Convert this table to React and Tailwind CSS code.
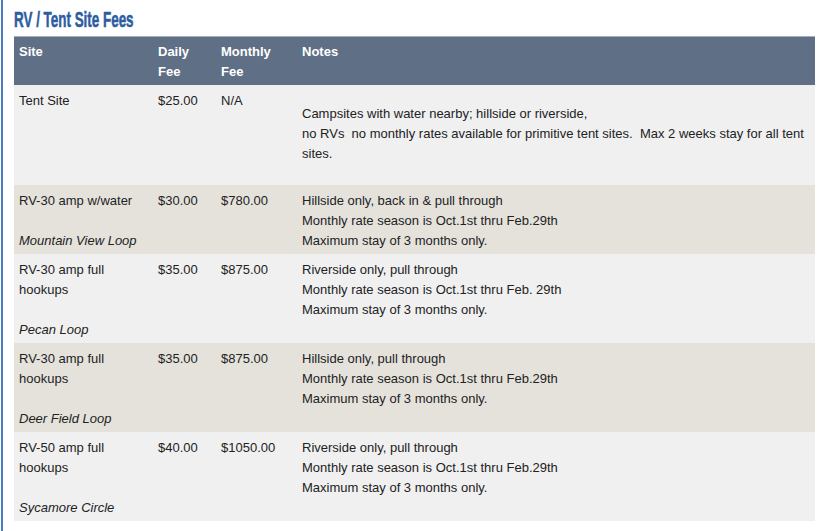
const rows = [
  {
    site: ["Tent Site"],
    loop: null,
    daily: "$25.00",
    monthly: "N/A",
    notes: [
      "Campsites with water nearby; hillside or riverside,",
      "no RVs\u00a0 no monthly rates available for primitive tent sites.\u00a0 Max 2 weeks stay for all tent sites.",
    ],
    tent: true,
  },
  {
    site: ["RV-30 amp w/water"],
    loop: "Mountain View Loop",
    daily: "$30.00",
    monthly: "$780.00",
    notes: [
      "Hillside only, back in & pull through",
      "Monthly rate season is Oct.1st thru Feb.29th",
      "Maximum stay of 3 months only.",
    ],
  },
  {
    site: ["RV-30 amp full hookups"],
    loop: "Pecan Loop",
    daily: "$35.00",
    monthly: "$875.00",
    notes: [
      "Riverside only, pull through",
      "Monthly rate season is Oct.1st thru Feb. 29th",
      "Maximum stay of 3 months only.",
    ],
  },
  {
    site: ["RV-30 amp full hookups"],
    loop: "Deer Field Loop",
    daily: "$35.00",
    monthly: "$875.00",
    notes: [
      "Hillside only, pull through",
      "Monthly rate season is Oct.1st thru Feb.29th",
      "Maximum stay of 3 months only.",
    ],
  },
  {
    site: ["RV-50 amp full hookups"],
    loop: "Sycamore Circle",
    daily: "$40.00",
    monthly: "$1050.00",
    notes: [
      "Riverside only, pull through",
      "Monthly rate season is Oct.1st thru Feb.29th",
      "Maximum stay of 3 months only.",
    ],
  },
];

export default function App() {
  return (
    <div className="min-h-[531px] bg-white ml-[1px] border-l-2 border-[#4a7bc4] pl-[11px] pr-[6px] font-['Liberation_Sans',Arial,sans-serif] text-[13px] leading-[20px] text-[#222]">
      {/* title */}
      <div className="h-[36px] pt-[9px] overflow-visible">
        <h2 className="inline-block origin-left scale-x-[0.61] font-bold text-[22px] leading-[22px] text-[#2d5c9f] whitespace-nowrap [-webkit-text-stroke:0.5px_#2d5c9f]">
          RV / Tent Site Fees
        </h2>
      </div>

      <table className="w-[801px] border-collapse table-fixed">
        <colgroup>
          <col className="w-[139px]" />
          <col className="w-[63px]" />
          <col className="w-[81px]" />
          <col />
        </colgroup>
        <thead>
          <tr className="bg-[#5f6f86] border-t border-[#a5aebb] text-white font-bold text-left align-top">
            <th className="pl-[5px] pt-[5px] pb-[3px]">Site</th>
            <th className="pl-[5px] pt-[5px] pb-[3px]">
              Daily
              <br />
              Fee
            </th>
            <th className="pl-[5px] pt-[5px] pb-[3px]">
              Monthly
              <br />
              Fee
            </th>
            <th className="pl-[5px] pt-[5px] pb-[3px]">Notes</th>
          </tr>
        </thead>
        <tbody>
          {rows.map((r, i) => (
            <tr
              key={i}
              className={`align-top ${i % 2 === 1 ? "bg-[#e5e2dc]" : "bg-[#f0f0f0]"}`}
            >
              <td className="pl-[5px] pr-[5px] pt-[6px] pb-[3px]">
                {r.site.map((s, j) => (
                  <div key={j}>{s}</div>
                ))}
                {r.loop && <div className="h-[20px]" />}
                {r.loop && <div className="italic">{r.loop}</div>}
              </td>
              <td className="pl-[5px] pt-[6px] pb-[3px]">{r.daily}</td>
              <td className="pl-[5px] pt-[6px] pb-[3px]">{r.monthly}</td>
              <td className="pl-[5px] pr-[4px] pt-[6px] pb-[3px]">
                {r.tent ? (
                  <div className="mt-[13px] mb-[18px]">
                    {r.notes.map((n, j) => (
                      <div key={j}>{n}</div>
                    ))}
                  </div>
                ) : (
                  r.notes.map((n, j) => <div key={j}>{n}</div>)
                )}
              </td>
            </tr>
          ))}
        </tbody>
      </table>
    </div>
  );
}
